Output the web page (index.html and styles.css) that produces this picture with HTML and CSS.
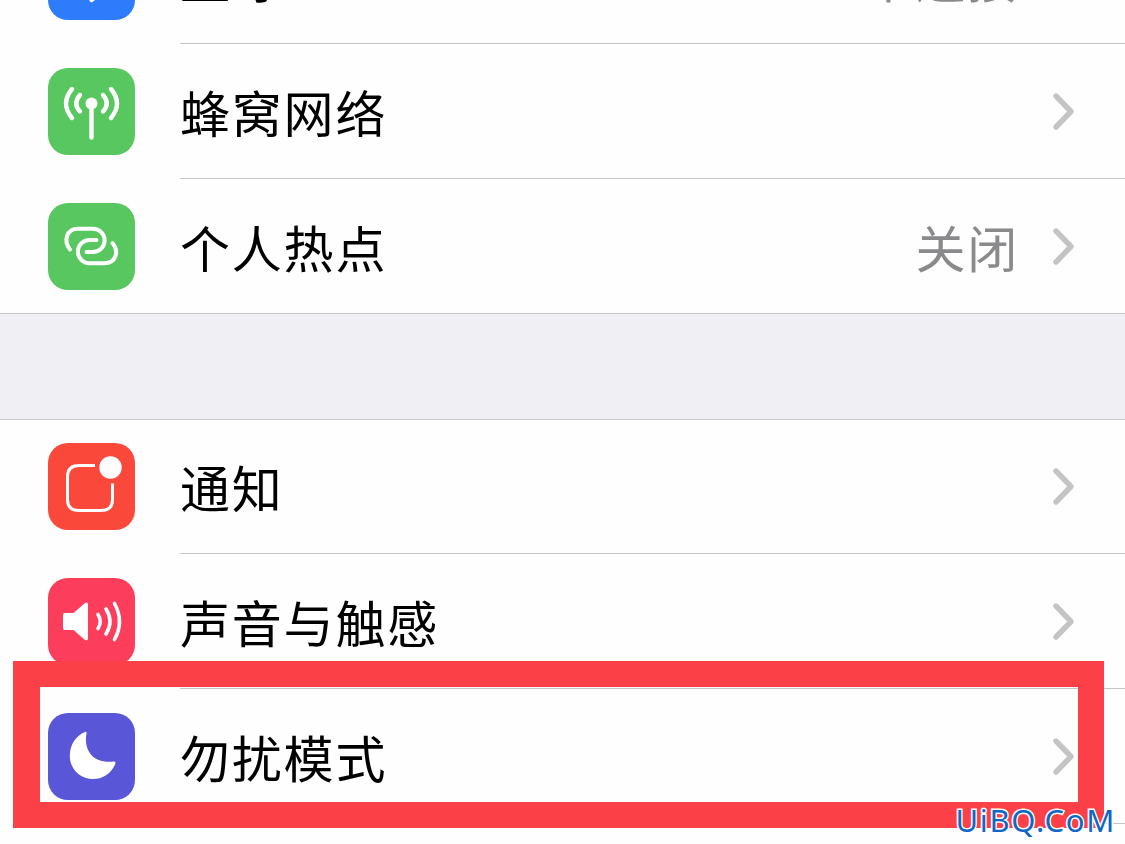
FILE: index.html
```
<!DOCTYPE html>
<html lang="zh-CN">
<head>
  <meta charset="UTF-8">
  <meta name="viewport" content="width=device-width, initial-scale=1.0">
  <title>设置</title>
  <link rel="stylesheet" href="styles.css">
</head>
<body>
  <div class="screen">

    <div class="group group-top">
      <div class="row">
        <svg class="icon blue" viewBox="0 0 87 87">
          <path d="M27 29 L58 55 L43.5 67.300 V19 L58 31 L27 58" fill="none" stroke="#fff" stroke-width="4" stroke-linecap="round" stroke-linejoin="round"/>
        </svg>
        <div class="content">
          <span class="label">蓝牙</span>
          <span class="value">未连接</span>
          <svg class="chevron" viewBox="0 0 24 40"><path d="M4 5 L19 20.5 L4 36"/></svg>
        </div>
      </div>
      <div class="row">
        <svg class="icon green" viewBox="0 0 87 87">
          <g fill="none" stroke="#fff" stroke-width="4.4" stroke-linecap="round">
            <path d="M43.5 37 V69.5"/>
            <path d="M32 27 Q24.500 35.500 32 43.500"/>
            <path d="M55 27 Q62.500 35.500 55 43.500"/>
            <path d="M24 21 Q12 35.500 24 50"/>
            <path d="M63 21 Q75 35.500 63 50"/>
          </g>
          <circle cx="43.500" cy="35.500" r="6" fill="#fff"/>
        </svg>
        <div class="content">
          <span class="label">蜂窝网络</span>
          <svg class="chevron" viewBox="0 0 24 40"><path d="M4 5 L19 20.5 L4 36"/></svg>
        </div>
      </div>
      <div class="row last">
        <svg class="icon green" viewBox="0 0 87 87">
          <g fill="none" stroke="#fff" stroke-width="4" stroke-linecap="round">
            <path d="M22 46.500 C15 38 18.500 25.800 30 25.800 H45 A11.600 11.600 0 0 1 45 49 H38.500"/>
            <path d="M64.500 40 C71.500 48.500 68 60.200 56.500 60.200 H41.500 A11.600 11.600 0 0 1 41.500 37 H48.500"/>
          </g>
        </svg>
        <div class="content">
          <span class="label">个人热点</span>
          <span class="value">关闭</span>
          <svg class="chevron" viewBox="0 0 24 40"><path d="M4 5 L19 20.5 L4 36"/></svg>
        </div>
      </div>
    </div>

    <div class="group">
      <div class="row">
        <svg class="icon orange" viewBox="0 0 87 87">
          <path d="M47 22.500 H31 Q19.500 22.500 19.500 34 V56.500 Q19.500 67.500 31 67.500 H53 Q64.500 67.500 64.500 56.500 V40.500" fill="none" stroke="#fff" stroke-width="3"/>
          <circle cx="62.500" cy="24.500" r="11.200" fill="#fff"/>
        </svg>
        <div class="content">
          <span class="label">通知</span>
          <svg class="chevron" viewBox="0 0 24 40"><path d="M4 5 L19 20.5 L4 36"/></svg>
        </div>
      </div>
      <div class="row">
        <svg class="icon pink" viewBox="0 0 87 87">
          <path d="M17 35 H25.500 L37 25 Q40 23.500 40 27 V60 Q40 63.500 37 62 L25.500 52 H17 Q15 52 15 50 V37 Q15 35 17 35 Z" fill="#fff"/>
          <g fill="none" stroke="#fff" stroke-width="3.600" stroke-linecap="round">
            <path d="M50 36.500 Q54.500 43.500 50 50.500"/>
            <path d="M58 31 Q66 43.500 58 56"/>
            <path d="M66.500 25.500 Q76.500 43.500 66.500 61.500"/>
          </g>
        </svg>
        <div class="content">
          <span class="label">声音与触感</span>
          <svg class="chevron" viewBox="0 0 24 40"><path d="M4 5 L19 20.5 L4 36"/></svg>
        </div>
      </div>
      <div class="row">
        <svg class="icon purple" viewBox="0 0 87 87">
          <path d="M38.500 20.500 C35.500 36 44 51 65.500 48.500 Q68.500 48.200 67 51.500 C62.500 61.500 54 66 45 66 C32 66 21.800 56 21.800 43 C21.800 31 28.500 22.500 37 19 Q39 18.300 38.500 20.500 Z" fill="#fff"/>
        </svg>
        <div class="content">
          <span class="label">勿扰模式</span>
          <svg class="chevron" viewBox="0 0 24 40"><path d="M4 5 L19 20.5 L4 36"/></svg>
        </div>
      </div>
    </div>

    <div class="highlight"></div>
    <div class="watermark">UiBQ.CoM</div>
  </div>
</body>
</html>
```
FILE: styles.css
```
* {
  box-sizing: border-box;
}
body {
  margin: 0;
  background-color: #fefefe;
  font-family: "Noto Sans CJK SC", sans-serif;
}
.screen {
  position: relative;
  width: 1125px;
  height: 844px;
  overflow: hidden;
  display: flex;
  flex-direction: column;
  gap: 105px;
  background-color: #efeff4;
}
.group {
  flex: 1 0 auto;
  background-color: #fefefe;
  box-shadow: inset 0 1px #c8c7cc;
}
.group-top {
  flex: none;
  margin-top: -91px;
}
.row {
  display: flex;
  height: 135px;
  padding-left: 48px;
}
.row.last {
  border-bottom: 1px solid #c8c7cc;
}
.icon {
  flex: none;
  width: 87px;
  height: 87px;
  margin: 24px 45px 0 0;
  border-radius: 20px;
}
.blue {
  background-color: #2e7cfb;
}
.green {
  background-color: #58c75f;
}
.orange {
  background-color: #fa493b;
}
.pink {
  background-color: #fc3e5c;
}
.purple {
  background-color: #5956d8;
}
.content {
  flex: 1;
  display: flex;
  align-items: center;
  padding-right: 49px;
  border-bottom: 1px solid #c4c4c6;
}
.last .content {
  border-bottom: none;
}
.label,
.value {
  font-size: 50px;
  font-weight: 400;
  line-height: 72px;
  letter-spacing: 1.8px;
  color: #000;
}
.label {
  flex: 1;
}
.value {
  margin-right: 33px;
  color: #8a8a8c;
}
.chevron {
  width: 24px;
  height: 40px;
  fill: none;
  stroke: #c4c4c6;
  stroke-width: 5.4;
  stroke-linecap: round;
  stroke-linejoin: round;
}
.highlight {
  position: absolute;
  left: 13px;
  top: 661px;
  width: 1091px;
  height: 167px;
  border: 26px solid #fc4048;
  border-left-width: 27px;
}
.watermark {
  position: absolute;
  right: 9px;
  top: 799px;
  font-family: "Noto Sans", sans-serif;
  font-size: 31px;
  line-height: 42px;
  letter-spacing: 1.7px;
  color: #0f66c8;
  -webkit-text-stroke: 3px #fff;
  paint-order: stroke fill;
}
```
